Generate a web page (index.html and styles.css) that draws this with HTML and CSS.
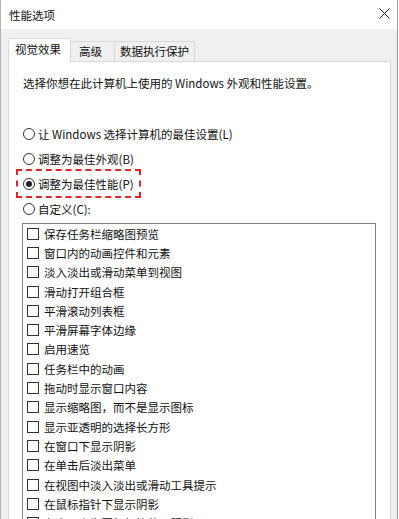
FILE: index.html
```html
<!DOCTYPE html>
<html lang="zh-CN">
<head>
  <meta charset="UTF-8" />
  <title>性能选项</title>
  <link rel="stylesheet" href="styles.css">
</head>
<body>
  <div class="window">
    <div class="titlebar">
      <span class="title">性能选项</span>
      <svg class="close" width="11" height="11" viewBox="0 0 11 11">
        <path d="M0.5 0.5 L10.5 10.5 M10.5 0.5 L0.5 10.5" stroke="#222" stroke-width="1" fill="none"/>
      </svg>
    </div>

    <div class="client">
      <div class="tabs">
        <div class="tab active">视觉效果</div>
        <div class="tab">高级</div>
        <div class="tab">数据执行保护</div>
      </div>

      <div class="panel">
        <p class="intro">选择你想在此计算机上使用的 Windows 外观和性能设置。</p>

        <div class="options">
          <label class="radio"><span class="circle"></span>让 Windows 选择计算机的最佳设置(L)</label>
          <label class="radio"><span class="circle"></span>调整为最佳外观(B)</label>
          <label class="radio checked highlight"><span class="circle"></span>调整为最佳性能(P)</label>
          <label class="radio"><span class="circle"></span>自定义(C):</label>
        </div>

        <ul class="effects">
          <li><span class="box"></span>保存任务栏缩略图预览</li>
          <li><span class="box"></span>窗口内的动画控件和元素</li>
          <li><span class="box"></span>淡入淡出或滑动菜单到视图</li>
          <li><span class="box"></span>滑动打开组合框</li>
          <li><span class="box"></span>平滑滚动列表框</li>
          <li><span class="box"></span>平滑屏幕字体边缘</li>
          <li><span class="box"></span>启用速览</li>
          <li><span class="box"></span>任务栏中的动画</li>
          <li><span class="box"></span>拖动时显示窗口内容</li>
          <li><span class="box"></span>显示缩略图，而不是显示图标</li>
          <li><span class="box"></span>显示亚透明的选择长方形</li>
          <li><span class="box"></span>在窗口下显示阴影</li>
          <li><span class="box"></span>在单击后淡出菜单</li>
          <li><span class="box"></span>在视图中淡入淡出或滑动工具提示</li>
          <li><span class="box"></span>在鼠标指针下显示阴影</li>
          <li><span class="box"></span>在桌面上为图标标签使用阴影</li>
        </ul>
      </div>
    </div>
  </div>
</body>
</html>
```

FILE: styles.css
```css
* {
  box-sizing: border-box;
}

html, body {
  margin: 0;
  padding: 0;
  width: 100%;
  height: 100%;
  background: #fff;
  overflow: hidden;
  font-family: "Noto Sans CJK SC", "Noto Sans", sans-serif;
  font-size: 11.5px;
  color: #111;
}

.window {
  width: 398px;
  height: 519px;
  border-left: 1px solid #b4b4b4;
  border-right: 1px solid #9a9a9a;
  display: flex;
  flex-direction: column;
  overflow: hidden;
}

.titlebar {
  height: 29px;
  flex: none;
  background: #fff;
  display: flex;
  align-items: center;
  justify-content: space-between;
  padding: 0 7px 0 8px;
}

.close {
  margin-top: -2px;
}

.client {
  flex: 1;
  background: #f0f0f0;
  padding: 9px 6px 0 7px;
  display: flex;
  flex-direction: column;
}

/* tab strip */
.tabs {
  display: flex;
  align-items: flex-end;
  height: 23px;
  position: relative;
  z-index: 1;
}

.tab {
  height: 20px;
  line-height: 19px;
  white-space: nowrap;
  background: #f0f0f0;
  border: 1px solid #d9d9d9;
  border-bottom: none;
  margin-left: -1px;
}

.tab.active {
  height: 24px;
  margin-left: 0;
  margin-bottom: -1px;
  background: #fff;
  line-height: 21px;
  padding: 0 9px 0 6px;
}

.tab:nth-child(2) {
  padding: 0 12px 0 8px;
}

.tab:nth-child(3) {
  padding: 0 5px 0 5px;
}

.panel {
  flex: 1;
  background: #fff;
  border: 1px solid #d9d9d9;
  border-bottom: none;
  padding: 11px 14px 0 14px;
}

.intro {
  margin: 0;
  line-height: 20px;
}

.options {
  margin-top: 28px;
  display: flex;
  flex-direction: column;
}

.radio {
  display: flex;
  align-items: center;
  height: 25px;
  width: max-content;
}

.circle {
  width: 12px;
  height: 12px;
  border: 1px solid #333;
  border-radius: 50%;
  margin-right: 3px;
  display: flex;
  align-items: center;
  justify-content: center;
  flex: none;
}

.radio.checked .circle::after {
  content: "";
  width: 6px;
  height: 6px;
  border-radius: 50%;
  background: #222;
}

.radio.highlight {
  margin-left: -5px;
  padding: 0 5px 0 5px;
  outline: 2px dashed #e0262a;
}

/* effects list box */
.effects {
  list-style: none;
  margin: 2px 0 0 -1px;
  padding: 0 0 0 4px;
  width: 354px;
  height: 320px;
  border: 1px solid #828282;
  border-bottom: none;
}

.effects li {
  display: flex;
  align-items: center;
  height: 19.3px;
}

.box {
  width: 12px;
  height: 12px;
  border: 1px solid #333;
  margin-right: 5px;
  flex: none;
}
```
